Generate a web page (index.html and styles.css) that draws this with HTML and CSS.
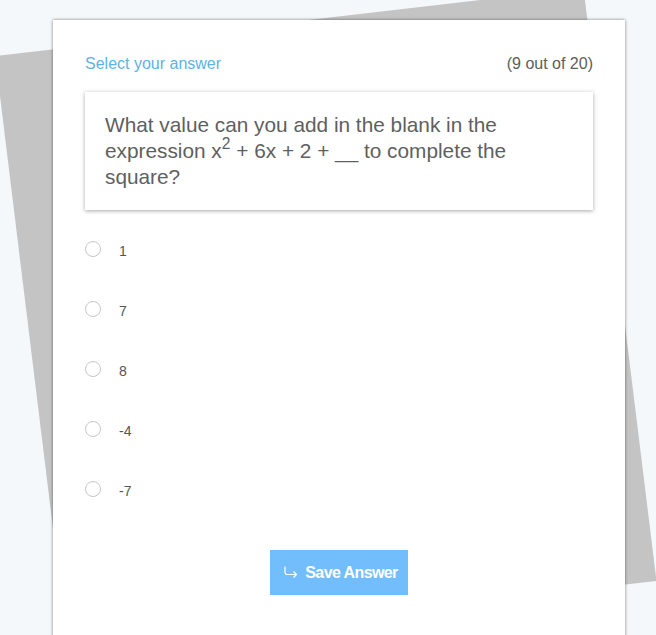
FILE: index.html
```html
<!DOCTYPE html>
<html lang="en">
<head>
<meta charset="utf-8">
<title>Quiz</title>
<link rel="stylesheet" href="styles.css">
</head>
<body>
<div class="stage">
  <svg class="backdrop" width="656" height="635" viewBox="0 0 656 635" aria-hidden="true">
    <polygon points="-4.9,56.1 583.5,-11.9 656.5,581 67.6,648" fill="#c4c4c4"/>
  </svg>
  <div class="card">
    <div class="card-head">
      <span class="prompt">Select your answer</span>
      <span class="count">(9 out of 20)</span>
    </div>
    <div class="question">What value can you add in the blank in the expression x<sup>2</sup> + 6x + 2 + __ to complete the square?</div>
    <ul class="options">
      <li class="option"><span class="radio"></span><span class="label">1</span></li>
      <li class="option"><span class="radio"></span><span class="label">7</span></li>
      <li class="option"><span class="radio"></span><span class="label">8</span></li>
      <li class="option"><span class="radio"></span><span class="label">-4</span></li>
      <li class="option"><span class="radio"></span><span class="label">-7</span></li>
    </ul>
    <div class="actions">
      <button class="save" type="button">
        <svg class="save-icon" width="15" height="12" viewBox="0 0 15 12" aria-hidden="true">
          <path d="M2 0.5 V6 Q2 8.5 4.5 8.5 H13.5" fill="none" stroke="#fff" stroke-width="1.2"/>
          <path d="M10.5 5.5 L13.5 8.5 L10.5 11.5" fill="none" stroke="#fff" stroke-width="1.2"/>
        </svg>
        <span>Save Answer</span>
      </button>
    </div>
  </div>
</div>
</body>
</html>
```

FILE: styles.css
```css
html, body {
  margin: 0;
  padding: 0;
}
body {
  background: #f4f8fb;
  font-family: "Liberation Sans", Arial, sans-serif;
}
.stage {
  position: relative;
  width: 656px;
  height: 635px;
  overflow: hidden;
}
.backdrop {
  position: absolute;
  left: 0;
  top: 0;
}
.card {
  position: relative;
  margin: 20px 0 0 53px;
  width: 572px;
  min-height: 700px;
  box-sizing: border-box;
  background: #fff;
  box-shadow: 0 0 3px rgba(0, 0, 0, 0.5);
  padding: 35px 32px 0 32px;
}
.card-head {
  display: flex;
  justify-content: space-between;
  align-items: baseline;
  font-size: 16px;
  line-height: 18px;
}
.prompt {
  color: #5bb3e6;
}
.count {
  color: #5d5d5d;
}
.question {
  margin-top: 19px;
  padding: 20px;
  background: #fff;
  box-shadow: 0 1px 4px rgba(0, 0, 0, 0.35);
  color: #5f5f5f;
  font-size: 20.8px;
  line-height: 26px;
}
.question sup {
  font-size: 0.75em;
  line-height: 0;
  vertical-align: 0.6em;
}
.options {
  list-style: none;
  margin: 9px 0 0 0;
  padding: 0;
}
.option {
  display: flex;
  align-items: center;
  height: 60px;
  gap: 18px;
}
.radio {
  width: 14px;
  height: 14px;
  border: 1px solid #c3c7cb;
  border-radius: 50%;
  background: #fff;
  flex: none;
}
.label {
  font-size: 14px;
  line-height: 16px;
  color: #555;
  margin-top: 4px;
}
.actions {
  display: flex;
  justify-content: center;
  margin-top: 31px;
}
.save {
  display: inline-flex;
  align-items: center;
  gap: 7px;
  height: 45px;
  padding: 0 10px 0 13px;
  border: none;
  border-radius: 0;
  background: #72befc;
  color: #fff;
  font-family: "Liberation Sans", Arial, sans-serif;
  font-weight: bold;
  font-size: 16px;
  letter-spacing: -0.6px;
  cursor: pointer;
}
.save-icon {
  flex: none;
  margin-top: -2px;
}
```
